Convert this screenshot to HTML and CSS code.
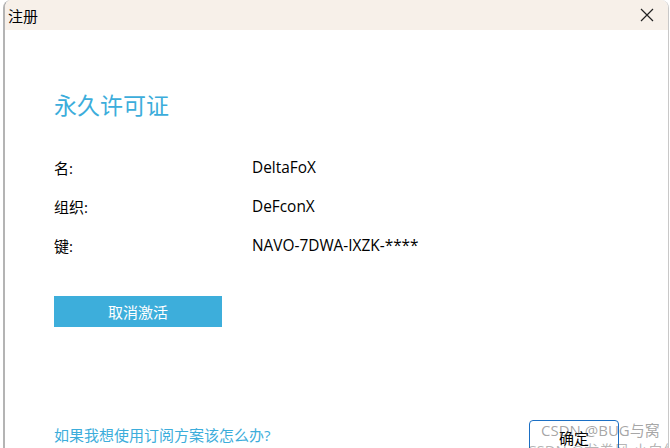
FILE: index.html
```html
<!DOCTYPE html>
<html lang="zh">
<head>
<meta charset="utf-8">
<link rel="stylesheet" href="styles.css">
</head>
<body>
<div class="window">
  <div class="titlebar">
    <span class="title">注册</span>
    <svg class="close" width="14" height="14" viewBox="0 0 14 14"><path d="M1 1 L13 13 M13 1 L1 13" stroke="#222" stroke-width="1.2" fill="none"/></svg>
  </div>
  <div class="content">
    <h1 class="heading">永久许可证</h1>
    <div class="rows">
      <div class="row"><span class="label">名:</span><span class="value">DeltaFoX</span></div>
      <div class="row"><span class="label">组织:</span><span class="value">DeFconX</span></div>
      <div class="row"><span class="label">键:</span><span class="value">NAVO-7DWA-IXZK-****</span></div>
    </div>
    <div class="btn-primary">取消激活</div>
    <div class="footer">
      <a class="link">如果我想使用订阅方案该怎么办?</a>
      <div class="btn-ok">确定</div>
    </div>
  </div>
  <div class="watermark">CSDN @BUG与窝</div>
  <div class="watermark2">CSDN @龙卷风 小白像</div>
</div>
</body>
</html>
```
FILE: styles.css
```css
html, body {
  margin: 0;
  padding: 0;
  background: #ffffff;
  width: 670px;
  height: 448px;
  overflow: hidden;
  font-family: "Open Sans", "Noto Sans CJK SC", sans-serif;
}
.window {
  position: relative;
  margin-left: 3px;
  width: 663px;
  height: 448px;
  border-left: 2px solid #b4b4b4;
  border-right: 1px solid #c8c8c8;
  border-top-left-radius: 8px;
  border-top-right-radius: 8px;
  overflow: hidden;
  background: #fff;
}
.titlebar {
  height: 30px;
  background: #f7f0e9;
  display: flex;
  align-items: center;
  justify-content: space-between;
  padding: 0 14px 0 3px;
}
.title {
  font-size: 15px;
  color: #000;
}
.close { display: block; }
.content {
  padding: 60px 0 0 49px;
  display: flex;
  flex-direction: column;
}
.heading {
  margin: 0;
  font-weight: normal;
  font-size: 23px;
  line-height: 30px;
  color: #3caddb;
}
.rows {
  margin-top: 28px;
  display: flex;
  flex-direction: column;
}
.row {
  display: flex;
  height: 39px;
  align-items: center;
  font-size: 15px;
  color: #000;
}
.label { width: 198px; }
.value { font-size: 15.4px; }
.btn-primary {
  margin-top: 31px;
  width: 168px;
  height: 31px;
  background: #3daedb;
  color: #fff;
  font-size: 15px;
  display: flex;
  align-items: center;
  justify-content: center;
}
.footer {
  margin-top: 93px;
  display: flex;
  align-items: flex-start;
  justify-content: space-between;
  padding-right: 49px;
}
.link {
  color: #3caddb;
  font-size: 15px;
  margin-top: 4px;
}
.btn-ok {
  width: 88px;
  height: 32px;
  border: 1px solid #1b6fc4;
  border-radius: 4px;
  font-size: 15px;
  color: #000;
  display: flex;
  align-items: center;
  justify-content: center;
}
.watermark {
  position: absolute;
  left: 536px;
  top: 419px;
  font-size: 15px;
  color: rgba(90, 90, 90, 0.55);
  white-space: nowrap;
}
.watermark2 {
  position: absolute;
  left: 522px;
  top: 439px;
  font-size: 15px;
  color: rgba(90, 90, 90, 0.45);
  white-space: nowrap;
}
```
